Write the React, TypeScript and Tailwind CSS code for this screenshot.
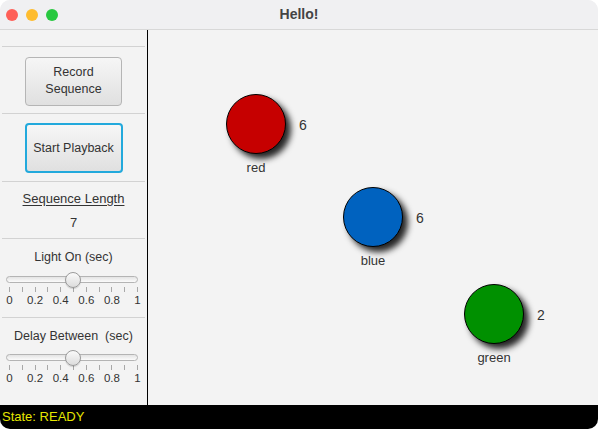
import React from "react";

const font = { fontFamily: '"Liberation Sans", Arial, sans-serif' };

const Separator = () => <div className="h-px bg-[#d2d2d2] mx-[2px]" />;

const ticks = Array.from({ length: 11 }, (_, i) => i);
const labels = ["0", "0.2", "0.4", "0.6", "0.8", "1"];

const Slider: React.FC = () => {
    return (
        <div className="relative h-[36px] w-full">
            {/* track */}
            <div className="absolute left-[6px] top-[5px] w-[132px] h-[7px] rounded-full border border-[#b4b4b4] bg-gradient-to-b from-[#e4e4e4] to-[#fbfbfb]" />
            {/* ticks */}
            {ticks.map((t) => (
                <div
                    key={t}
                    className="absolute top-[16px] w-px h-[5px] bg-[#a8a8a8]"
                    style={{ left: 9 + t * 12.8 }}
                />
            ))}
            {/* labels */}
            {labels.map((l, i) => (
                <span
                    key={l}
                    className="absolute top-[22px] text-[11.5px] leading-[14px] text-[#333] -translate-x-1/2"
                    style={{ left: 9.5 + i * 25.6 }}
                >
                    {l}
                </span>
            ))}
            {/* thumb */}
            <div className="absolute left-[65px] top-[1px] w-[16px] h-[16px] rounded-full border border-[#9a9a9a] bg-gradient-to-b from-[#fafafa] to-[#dcdcdc] shadow-[0_1px_1px_rgba(0,0,0,0.15)]" />
        </div>
    );
};

const Light: React.FC<{ x: number; y: number; color: string; name: string; count: number }> = ({
    x,
    y,
    color,
    name,
    count,
}) => (
    <>
        <div
            className="absolute w-[60px] h-[60px] rounded-full border-[1.5px] border-black shadow-[5px_5px_6px_rgba(0,0,0,0.85)]"
            style={{ left: x - 30, top: y - 30, backgroundColor: color }}
        />
        <span
            className="absolute text-[14px] leading-[16px] text-[#333]"
            style={{ left: x + 43, top: y - 7 }}
        >
            {count}
        </span>
        <span
            className="absolute text-[13px] leading-[16px] text-[#333] -translate-x-1/2"
            style={{ left: x, top: y + 36 }}
        >
            {name}
        </span>
    </>
);

export default function App() {
    return (
        <div className="w-[598px] h-[429px] bg-white" style={font}>
            <div className="w-full h-full rounded-[10px] overflow-hidden bg-[#f3f3f3] flex flex-col">
                {/* Title bar */}
                <div className="relative h-[30px] shrink-0 bg-[#f0f0f2] border-b border-[#d8d8d8] flex items-center justify-center">
                    <div className="absolute left-[6px] top-[9px] flex gap-[8px]">
                        <div className="w-[12px] h-[12px] rounded-full bg-[#fe5f57]" />
                        <div className="w-[12px] h-[12px] rounded-full bg-[#febc2e]" />
                        <div className="w-[12px] h-[12px] rounded-full bg-[#28c840]" />
                    </div>
                    <span className="text-[14px] font-bold text-[#444]">Hello!</span>
                </div>

                {/* Body */}
                <div className="flex flex-1 min-h-0">
                    {/* Controls */}
                    <div className="w-[148px] shrink-0 border-r border-black flex flex-col">
                        <div className="h-[16px]" />
                        <Separator />
                        <div className="h-[66px] flex items-center justify-center pt-[2px]">
                            <button className="w-[97px] h-[49px] rounded-[4px] border border-[#b5b5b5] bg-gradient-to-b from-[#f6f6f6] to-[#e0e0e0] text-[12.5px] leading-[17px] text-[#333]">
                                Record
                                <br />
                                Sequence
                            </button>
                        </div>
                        <Separator />
                        <div className="h-[67px] flex items-center justify-center pt-[1px]">
                            <button className="w-[98px] h-[50px] rounded-[4px] border-2 border-[#22a9dc] bg-gradient-to-b from-[#f6f6f6] to-[#e0e0e0] text-[12.5px] text-[#333]">
                                Start Playback
                            </button>
                        </div>
                        <Separator />
                        <div className="h-[56px] flex flex-col items-center pt-[9px]">
                            <span className="text-[13px] leading-[16px] text-[#333] underline underline-offset-2">
                                Sequence Length
                            </span>
                            <span className="text-[13px] leading-[16px] text-[#333] mt-[8px]">7</span>
                        </div>
                        <Separator />
                        <div className="h-[78px] flex flex-col items-center pt-[10px]">
                            <span className="text-[12.5px] leading-[16px] text-[#333]">Light On (sec)</span>
                            <div className="mt-[6px] w-full">
                                <Slider />
                            </div>
                        </div>
                        <Separator />
                        <div className="flex-1 flex flex-col items-center pt-[10px]">
                            <span className="text-[12.5px] leading-[16px] text-[#333] whitespace-pre">
                                Delay Between  (sec)
                            </span>
                            <div className="mt-[5px] w-full">
                                <Slider />
                            </div>
                        </div>
                    </div>

                    {/* Canvas */}
                    <div className="relative flex-1">
                        <Light x={108} y={94} color="#c60000" name="red" count={6} />
                        <Light x={225} y={187} color="#0062bf" name="blue" count={6} />
                        <Light x={346} y={284} color="#009000" name="green" count={2} />
                    </div>
                </div>

                {/* Status */}
                <div className="h-[24px] shrink-0 bg-black flex items-center px-[2px]">
                    <span className="text-[13px] text-[#e6e600]">State: READY</span>
                </div>
            </div>
        </div>
    );
}
